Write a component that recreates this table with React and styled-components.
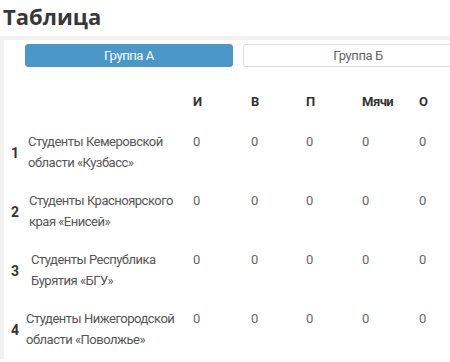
import React from "react";
import styled, { createGlobalStyle, css } from "styled-components";

const GlobalStyle = createGlobalStyle`
  html, body {
    margin: 0;
    padding: 0;
    background: #fff;
    overflow: hidden;
  }
  body {
    width: 450px;
    height: 362px;
  }
`;

const narrow = `Roboto, "Liberation Sans", sans-serif`;

const Page = styled.div`
  width: 450px;
  height: 362px;
  overflow: hidden;
`;

const Title = styled.h1`
  margin: 0;
  height: 36px;
  padding: 1px 0 0 3px;
  box-sizing: border-box;
  font-family: "Open Sans", sans-serif;
  font-weight: 700;
  font-size: 22px;
  line-height: 30px;
  color: #383838;
`;

const Card = styled.div`
  width: 490px;
  border-top: 4px solid #f1f1f1;
  border-left: 4px solid #f1f1f1;
  padding-top: 4px;
  font-family: ${narrow};
  letter-spacing: -0.5px;
`;

const Tabs = styled.div`
  display: flex;
  gap: 10px;
  padding-left: 21px;
`;

const Tab = styled.button`
  width: ${(p) => p.width}px;
  height: 23px;
  border-radius: 3px;
  border: 1px solid #dcdcdc;
  background: #fff;
  color: #666;
  font-family: ${narrow};
  font-size: 13px;
  letter-spacing: -0.4px;
  cursor: pointer;
  ${(p) =>
    p.active &&
    css`
      background: #4b97c8;
      border-color: #4b97c8;
      color: #fff;
    `}
`;

const Grid = styled.div`
  display: grid;
  grid-template-columns: 6px 16px 167px 58px 55px 56px 57px 60px;
  margin-top: 24px;
  white-space: nowrap;
`;

const Head = styled.div`
  height: 32px;
  font-size: 13px;
  font-weight: 700;
  line-height: 21px;
  color: #333;
`;

const Place = styled.div`
  grid-column: 2;
  display: flex;
  align-items: center;
  height: 59px;
  font-size: 14px;
  font-weight: 700;
  color: #333;
  padding-left: 1px;
`;

const Team = styled.div`
  padding: 8px 0 9px ${(p) => p.shift}px;
  font-size: 13px;
  line-height: 21px;
  color: #555;
`;

const Stat = styled.div`
  padding-top: 8px;
  font-size: 13px;
  line-height: 21px;
  color: #666;
`;

const headers = ["И", "В", "П", "Мячи", "О"];

const teams = [
  { name: ["Студенты Кемеровской", "области «Кузбасс»"], shift: 2 },
  { name: ["Студенты Красноярского", "края «Енисей»"], shift: 3 },
  { name: ["Студенты Республика", "Бурятия «БГУ»"], shift: 5 },
  { name: ["Студенты Нижегородской", "области «Поволжье»"], shift: 0 },
];

export default function App() {
  return (
    <Page>
      <GlobalStyle />
      <Title>Таблица</Title>
      <Card>
        <Tabs>
          <Tab active width={208}>Группа А</Tab>
          <Tab width={230}>Группа Б</Tab>
        </Tabs>
        <Grid>
          <Head />
          <Head />
          <Head />
          {headers.map((h) => (
            <Head key={h}>{h}</Head>
          ))}
          {teams.map((t, i) => (
            <React.Fragment key={i}>
              <Place>{i + 1}</Place>
              <Team shift={t.shift}>
                {t.name[0]}
                <br />
                {t.name[1]}
              </Team>
              {headers.map((h) => (
                <Stat key={h}>0</Stat>
              ))}
            </React.Fragment>
          ))}
        </Grid>
      </Card>
    </Page>
  );
}
